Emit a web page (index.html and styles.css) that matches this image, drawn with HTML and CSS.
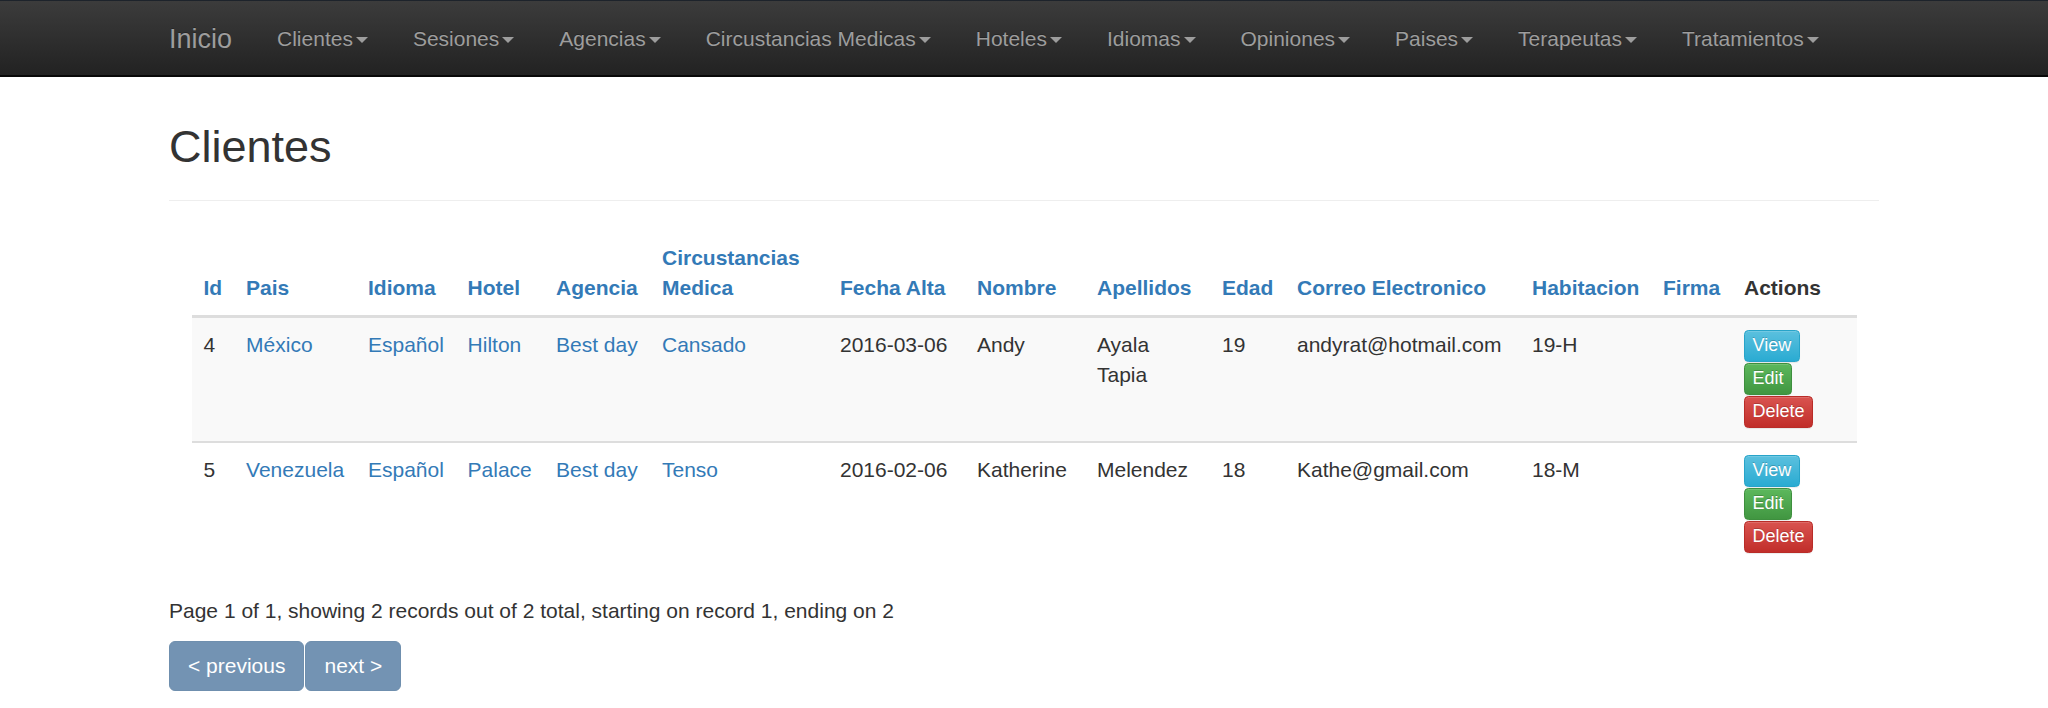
FILE: index.html
```html
<!DOCTYPE html>
<html lang="es">
<head>
<meta charset="utf-8">
<title>Clientes</title>
<link rel="stylesheet" href="styles.css">
</head>
<body>
<nav class="navbar">
  <div class="container nav-inner">
    <a class="brand" href="#">Inicio</a>
    <ul class="nav">
      <li><a href="#">Clientes<span class="caret"></span></a></li>
      <li><a href="#">Sesiones<span class="caret"></span></a></li>
      <li><a href="#">Agencias<span class="caret"></span></a></li>
      <li><a href="#">Circustancias Medicas<span class="caret"></span></a></li>
      <li><a href="#">Hoteles<span class="caret"></span></a></li>
      <li><a href="#">Idiomas<span class="caret"></span></a></li>
      <li><a href="#">Opiniones<span class="caret"></span></a></li>
      <li><a href="#">Paises<span class="caret"></span></a></li>
      <li><a href="#">Terapeutas<span class="caret"></span></a></li>
      <li><a href="#">Tratamientos<span class="caret"></span></a></li>
    </ul>
  </div>
</nav>
<div class="container">
  <div class="page-header"><h1>Clientes</h1></div>
  <div class="table-wrap">
    <table class="table">
      <colgroup>
        <col class="c-id"><col class="c-pais"><col class="c-idioma"><col class="c-hotel"><col class="c-agencia"><col class="c-circ"><col class="c-fecha"><col class="c-nombre"><col class="c-apellidos"><col class="c-edad"><col class="c-correo"><col class="c-hab"><col class="c-firma"><col class="c-actions">
      </colgroup>
      <thead>
        <tr>
          <th><a href="#">Id</a></th>
          <th><a href="#">Pais</a></th>
          <th><a href="#">Idioma</a></th>
          <th><a href="#">Hotel</a></th>
          <th><a href="#">Agencia</a></th>
          <th><a href="#">Circustancias Medica</a></th>
          <th><a href="#">Fecha Alta</a></th>
          <th><a href="#">Nombre</a></th>
          <th><a href="#">Apellidos</a></th>
          <th><a href="#">Edad</a></th>
          <th><a href="#">Correo Electronico</a></th>
          <th><a href="#">Habitacion</a></th>
          <th><a href="#">Firma</a></th>
          <th class="actions-h">Actions</th>
        </tr>
      </thead>
      <tbody>
        <tr class="odd">
          <td>4</td>
          <td><a href="#">México</a></td>
          <td><a href="#">Español</a></td>
          <td><a href="#">Hilton</a></td>
          <td><a href="#">Best day</a></td>
          <td><a href="#">Cansado</a></td>
          <td class="nowrap">2016-03-06</td>
          <td>Andy</td>
          <td>Ayala Tapia</td>
          <td>19</td>
          <td>andyrat@hotmail.com</td>
          <td>19-H</td>
          <td></td>
          <td class="actions"><a class="btn btn-info" href="#">View</a> <a class="btn btn-success" href="#">Edit</a> <a class="btn btn-danger" href="#">Delete</a></td>
        </tr>
        <tr>
          <td>5</td>
          <td><a href="#">Venezuela</a></td>
          <td><a href="#">Español</a></td>
          <td><a href="#">Palace</a></td>
          <td><a href="#">Best day</a></td>
          <td><a href="#">Tenso</a></td>
          <td class="nowrap">2016-02-06</td>
          <td>Katherine</td>
          <td>Melendez</td>
          <td>18</td>
          <td>Kathe@gmail.com</td>
          <td>18-M</td>
          <td></td>
          <td class="actions"><a class="btn btn-info" href="#">View</a> <a class="btn btn-success" href="#">Edit</a> <a class="btn btn-danger" href="#">Delete</a></td>
        </tr>
      </tbody>
    </table>
  </div>
  <div class="paginator">
    <p class="counter">Page 1 of 1, showing 2 records out of 2 total, starting on record 1, ending on 2</p>
    <ul class="pager">
      <li><a href="#">&lt; previous</a></li>
      <li><a href="#">next &gt;</a></li>
    </ul>
  </div>
</div>
</body>
</html>
```
FILE: styles.css
```css
* { box-sizing: border-box; }
html, body { margin: 0; padding: 0; }
body {
  font-family: "Liberation Sans", Arial, Helvetica, sans-serif;
  font-size: 21px;
  line-height: 30px;
  color: #333;
  background: #fff;
}
a { color: #337ab7; text-decoration: none; }

.container {
  width: 1755px;
  margin: 0 auto;
  padding: 0 22.5px;
}

/* navbar */
.navbar {
  background: linear-gradient(to bottom, #3c3c3c 0, #222 100%);
  border-bottom: 2px solid #080808;
  box-shadow: inset 0 1px 0 #1d232b;
}
.nav-inner { display: flex; align-items: stretch; }
.brand {
  display: block;
  margin-left: -22.5px;
  padding: 24px 22.5px 21px;
  font-size: 27px;
  line-height: 30px;
  color: #9d9d9d;
  text-shadow: 0 -1px 0 rgba(0,0,0,.25);
}
.nav { display: flex; list-style: none; margin: 0; padding: 0; }
.nav a {
  display: block;
  padding: 24px 22.5px 21px;
  line-height: 30px;
  color: #9d9d9d;
  text-shadow: 0 -1px 0 rgba(0,0,0,.25);
}
.caret {
  display: inline-block;
  width: 0;
  height: 0;
  margin-left: 3px;
  vertical-align: middle;
  border-top: 6px solid;
  border-right: 6px solid transparent;
  border-left: 6px solid transparent;
}

/* header */
.page-header {
  margin: 45px 0 30px;
  padding-bottom: 28px;
  border-bottom: 1.5px solid #eee;
}
.page-header h1 {
  margin: 0;
  font-size: 45px;
  line-height: 49.5px;
  font-weight: 500;
  color: #333;
}

/* table */
.table-wrap { padding: 0 22.5px; }
.table {
  width: 100%;
  table-layout: fixed;
  border-collapse: collapse;
  border-spacing: 0;
  margin-bottom: 30px;
}
.c-id { width: 42.6px; }
.c-pais { width: 121.9px; }
.c-idioma { width: 99.6px; }
.c-hotel { width: 88.4px; }
.c-agencia { width: 106px; }
.c-circ { width: 178px; }
.c-fecha { width: 137px; }
.c-nombre { width: 120px; }
.c-apellidos { width: 125px; }
.c-edad { width: 75px; }
.c-correo { width: 235px; }
.c-hab { width: 131px; }
.c-firma { width: 81px; }
.c-actions { width: 124.5px; }

.table th {
  text-align: left;
  vertical-align: bottom;
  font-weight: bold;
  padding: 12px;
  border-bottom: 3px solid #ddd;
}
.table td {
  vertical-align: top;
  padding: 12px;
  border-top: 2px solid #ddd;
}
.table td.nowrap { white-space: nowrap; }
.table tbody tr:first-child td { border-top: 0; }
.table tr.odd td { background: #f9f9f9; }

.btn {
  display: inline-block;
  vertical-align: top;
  margin-bottom: 1px;
  padding: 1.5px 7.5px;
  font-size: 18px;
  line-height: 27px;
  border-radius: 4.5px;
  border: 1px solid transparent;
  color: #fff;
  text-shadow: 0 -1px 0 rgba(0,0,0,.2);
  box-shadow: inset 0 1px 0 rgba(255,255,255,.15), 0 1px 1px rgba(0,0,0,.075);
  white-space: nowrap;
}
.btn-info { background: linear-gradient(to bottom, #5bc0de 0, #2aabd2 100%); border-color: #28a4c9; }
.btn-success { background: linear-gradient(to bottom, #5cb85c 0, #419641 100%); border-color: #3e8f3e; }
.btn-danger { background: linear-gradient(to bottom, #d9534f 0, #c12e2a 100%); border-color: #b92c28; }

/* paginator */
.counter { margin: 0 0 15px; }
.pager {
  display: flex;
  list-style: none;
  margin: 0;
  padding: 0;
}
.pager a {
  display: block;
  padding: 9px 18px;
  line-height: 30px;
  color: #fff;
  background: #7393b3;
  border: 1px solid #6f8fae;
  border-radius: 6px;
  margin-right: 1px;
}
```
